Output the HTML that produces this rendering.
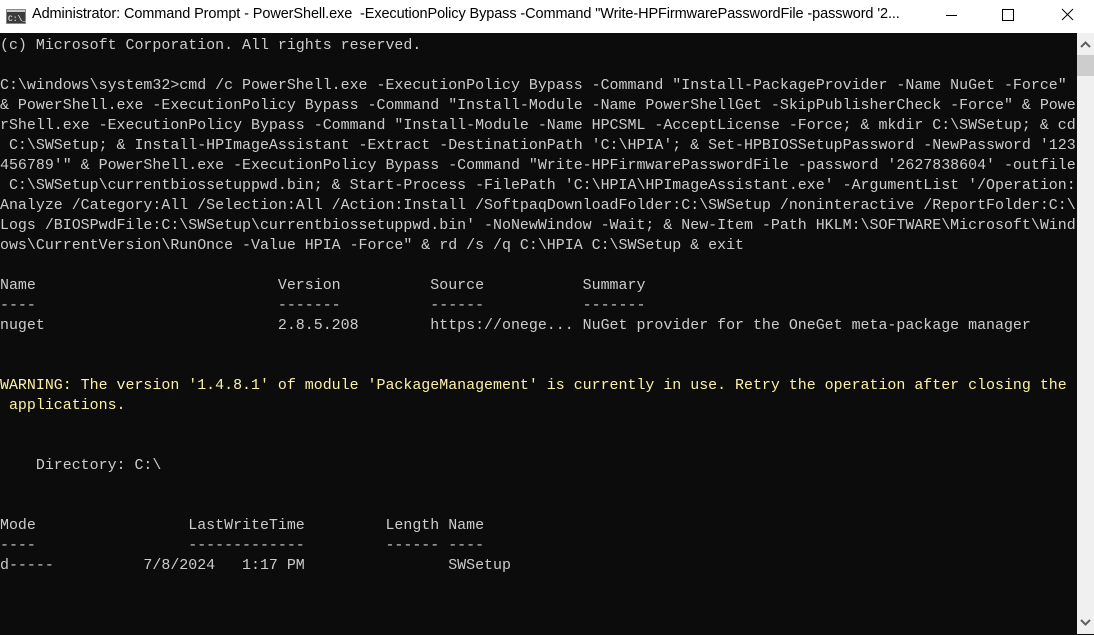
<!DOCTYPE html>
<html><head><meta charset="utf-8"><style>
html,body{margin:0;padding:0;width:1094px;height:635px;overflow:hidden;background:#0c0c0c}
#tb{position:absolute;left:0;top:0;width:1094px;height:33px;background:#fff}
#title{position:absolute;left:32px;top:6px;font:14.5px "Liberation Sans",sans-serif;color:#000;white-space:nowrap;letter-spacing:-0.1px}
#con{position:absolute;left:0;top:33px;width:1077px;height:602px;background:#0c0c0c;overflow:hidden}
pre{margin:0;position:absolute;left:0;top:3px;font:14.95px/20px "Liberation Mono",monospace;color:#cccccc}
.y{color:#f9f1a5}
#sb{position:absolute;left:1077px;top:33px;width:17px;height:601px;background:#f0f0f0}
#th{position:absolute;left:1077px;top:55px;width:17px;height:21px;background:#cdcdcd}
</style></head><body>
<div id="tb">
<svg style="position:absolute;left:6px;top:9px" width="20" height="15" viewBox="0 0 20 15"><rect x="0.5" y="0.5" width="19" height="14" fill="#3b3b3b" stroke="#888"/><rect x="1" y="1" width="18" height="2" fill="#ccc"/><text x="2" y="12" font-family="Liberation Mono" font-size="8" fill="#fff">C:\_</text></svg>
<div id="title">Administrator: Command Prompt - PowerShell.exe &nbsp;-ExecutionPolicy Bypass -Command "Write-HPFirmwarePasswordFile -password '2...</div>
<svg style="position:absolute;left:946px;top:8px" width="140" height="18" viewBox="0 0 140 18">
<line x1="0" y1="7.5" x2="11" y2="7.5" stroke="#000" stroke-width="1"/>
<rect x="56.5" y="1.5" width="11" height="11" fill="none" stroke="#000"/>
<line x1="116" y1="1" x2="127" y2="12" stroke="#000"/><line x1="127" y1="1" x2="116" y2="12" stroke="#000"/>
</svg>
</div>
<div id="con"><pre>(c) Microsoft Corporation. All rights reserved.

C:\windows\system32&gt;cmd /c PowerShell.exe -ExecutionPolicy Bypass -Command "Install-PackageProvider -Name NuGet -Force"
&amp; PowerShell.exe -ExecutionPolicy Bypass -Command "Install-Module -Name PowerShellGet -SkipPublisherCheck -Force" &amp; Powe
rShell.exe -ExecutionPolicy Bypass -Command "Install-Module -Name HPCSML -AcceptLicense -Force; &amp; mkdir C:\SWSetup; &amp; cd
 C:\SWSetup; &amp; Install-HPImageAssistant -Extract -DestinationPath 'C:\HPIA'; &amp; Set-HPBIOSSetupPassword -NewPassword '123
456789'" &amp; PowerShell.exe -ExecutionPolicy Bypass -Command "Write-HPFirmwarePasswordFile -password '2627838604' -outfile
 C:\SWSetup\currentbiossetuppwd.bin; &amp; Start-Process -FilePath 'C:\HPIA\HPImageAssistant.exe' -ArgumentList '/Operation:
Analyze /Category:All /Selection:All /Action:Install /SoftpaqDownloadFolder:C:\SWSetup /noninteractive /ReportFolder:C:\
Logs /BIOSPwdFile:C:\SWSetup\currentbiossetuppwd.bin' -NoNewWindow -Wait; &amp; New-Item -Path HKLM:\SOFTWARE\Microsoft\Wind
ows\CurrentVersion\RunOnce -Value HPIA -Force" &amp; rd /s /q C:\HPIA C:\SWSetup &amp; exit

Name                           Version          Source           Summary
----                           -------          ------           -------
nuget                          2.8.5.208        https://onege... NuGet provider for the OneGet meta-package manager


<span class="y">WARNING: The version '1.4.8.1' of module 'PackageManagement' is currently in use. Retry the operation after closing the
 applications.</span>


    Directory: C:\


Mode                 LastWriteTime         Length Name
----                 -------------         ------ ----
d-----          7/8/2024   1:17 PM                SWSetup
</pre></div>
<div id="sb"></div><div id="th"></div>
<svg style="position:absolute;left:1077px;top:38px" width="17" height="12"><polyline points="4,9 8.5,4.5 13,9" fill="none" stroke="#606060" stroke-width="2"/></svg>
<svg style="position:absolute;left:1077px;top:617px" width="17" height="12"><polyline points="4,3 8.5,7.5 13,3" fill="none" stroke="#606060" stroke-width="2"/></svg>
</body></html>
